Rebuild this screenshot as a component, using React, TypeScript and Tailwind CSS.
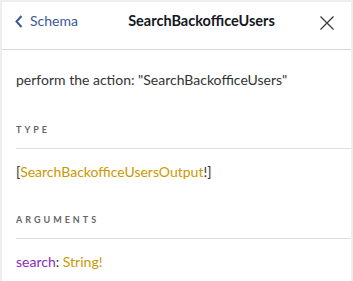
export default function App() {
  return (
    <div className="h-[281px] w-[353px] bg-[#eeeeee] pl-[2px] pr-[2px] pt-[2px] font-['Lato',sans-serif] text-[14px] text-[#333]">
      <div className="h-full bg-white">
        {/* title bar */}
        <div className="flex h-[48px] items-start border-b border-[#d6d6d6] pt-[9px] leading-[20px]">
          <div className="flex w-[100px] items-center pl-[13px] text-[#3B5998]">
            <svg width="8" height="13" viewBox="0 0 8 13" className="mr-[7px] mt-[1px]">
              <path d="M6.5 1 L1.5 6.5 L6.5 12" fill="none" stroke="#3B5998" strokeWidth="2" />
            </svg>
            <span>Schema</span>
          </div>
          <div className="flex-1 text-center text-[14.5px] font-bold text-[#141823]">SearchBackofficeUsers</div>
          <div className="flex w-[50px] justify-end pr-[17px] pt-[5px]">
            <svg width="14" height="14" viewBox="0 0 14 14">
              <path d="M0.5 0.5 L13.5 13.5 M13.5 0.5 L0.5 13.5" stroke="#3a3a3a" strokeWidth="1.3" />
            </svg>
          </div>
        </div>

        <div className="pl-[14px] pt-[20px] leading-[20px]">
          <p>perform the action: "SearchBackofficeUsers"</p>

          <div className="mt-[34px] border-b border-[#e0e0e0] pb-[12px] text-[9px] font-bold leading-[12px] tracking-[3px] text-[#666]">
            TYPE
          </div>
          <div className="mt-[13px]">
            [<span className="text-[#CA9800]">SearchBackofficeUsersOutput</span>!]
          </div>

          <div className="mt-[32px] border-b border-[#e0e0e0] pb-[12px] text-[9px] font-bold leading-[12px] tracking-[3px] text-[#666]">
            ARGUMENTS
          </div>
          <div className="mt-[13px]">
            <span className="text-[#8B2BB9]">search</span>: <span className="text-[#CA9800]">String!</span>
          </div>
        </div>
      </div>
    </div>
  )
}
